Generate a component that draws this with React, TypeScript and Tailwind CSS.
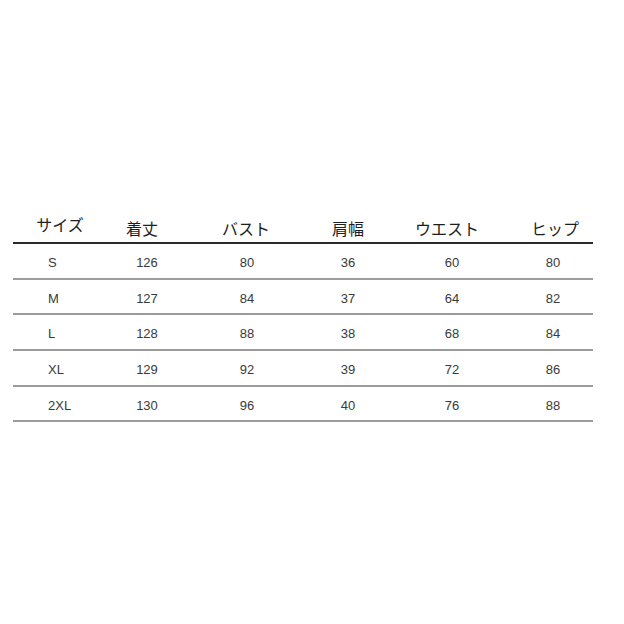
const rows = [
  ["S", "126", "80", "36", "60", "80"],
  ["M", "127", "84", "37", "64", "82"],
  ["L", "128", "88", "38", "68", "84"],
  ["XL", "129", "92", "39", "72", "86"],
  ["2XL", "130", "96", "40", "76", "88"],
];

const grid = "grid grid-cols-[94px_70px_138px_66px_132px_80px]";

export default function App() {
  return (
    <div className="w-[624px] h-[624px] bg-white flex flex-col pt-[211px] pl-[13px]">
      <div className="w-[580px] font-['Liberation_Sans',Arial,sans-serif]">
        {/* header */}
        <div
          className={`${grid} h-[33px] border-b-2 border-[#2b2b2b] text-[16px] text-[#1e1e1e] font-['Noto_Sans_CJK_JP',sans-serif] leading-none`}
        >
          <div className="flex items-center justify-center pb-[6px]">サイズ</div>
          <div className="flex items-center justify-center pt-[2px]">着丈</div>
          <div className="flex items-center justify-center pt-[2px]">バスト</div>
          <div className="flex items-center justify-center pt-[2px]">肩幅</div>
          <div className="flex items-center justify-center pt-[2px]">ウエスト</div>
          <div className="flex items-center justify-center pt-[2px] pl-[4px]">ヒップ</div>
        </div>

        {/* rows */}
        {rows.map((r) => (
          <div
            key={r[0]}
            className={`${grid} h-[35.7px] border-b-2 border-[#9c9c9c] text-[13px] text-[#3a3a3a]`}
          >
            <div className="flex items-center pl-[35px] pt-[4px]">{r[0]}</div>
            <div className="flex items-center justify-center pl-[10px] pt-[4px]">{r[1]}</div>
            <div className="flex items-center justify-center pl-[2px] pt-[4px]">{r[2]}</div>
            <div className="flex items-center justify-center pt-[4px]">{r[3]}</div>
            <div className="flex items-center justify-center pl-[10px] pt-[4px]">{r[4]}</div>
            <div className="flex items-center justify-center pt-[4px]">{r[5]}</div>
          </div>
        ))}
      </div>
    </div>
  );
}
